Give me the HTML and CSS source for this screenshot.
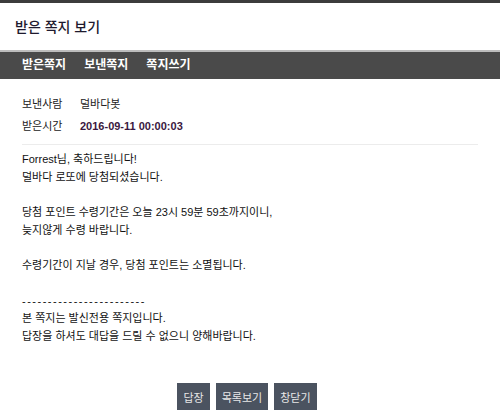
FILE: index.html
```html
<!DOCTYPE html>
<html lang="ko">
<head>
    <meta charset="UTF-8">
    <title>받은 쪽지 보기</title>
    <link rel="stylesheet" href="styles.css">
</head>
<body>
    <div class="popup">
        <h1 class="title">받은 쪽지 보기</h1>
        <ul class="tabs">
            <li><a href="#">받은쪽지</a></li>
            <li><a href="#">보낸쪽지</a></li>
            <li><a href="#">쪽지쓰기</a></li>
        </ul>

        <div class="content">
            <dl class="info">
                <dt>보낸사람</dt>
                <dd>덜바다봇</dd>
                <dt>받은시간</dt>
                <dd class="date">2016-09-11 00:00:03</dd>
            </dl>

            <div class="memo">
                <p>Forrest님, 축하드립니다!<br>덜바다 로또에 당첨되셨습니다.</p>
                <p>당첨 포인트 수령기간은 오늘 23시 59분 59초까지이니,<br>늦지않게 수령 바랍니다.</p>
                <p>수령기간이 지날 경우, 당첨 포인트는 소멸됩니다.</p>
                <p><span class="dash">------------------------</span><br>본 쪽지는 발신전용 쪽지입니다.<br>답장을 하셔도 대답을 드릴 수 없으니 양해바랍니다.</p>
            </div>
        </div>

        <div class="btns">
            <button>답장</button>
            <button>목록보기</button>
            <button>창닫기</button>
        </div>
    </div>
</body>
</html>
```

FILE: styles.css
```css
body {
    margin: 0;
    font-family: "Liberation Sans", "Noto Sans CJK KR", sans-serif;
    font-size: 11px;
    color: #222;
    background: #fff;
}

.popup {
    border-top: 3px solid #3c3c3c;
}

.title {
    margin: 0;
    padding: 13px 15px 12px;
    font-size: 14px;
    font-weight: 500;
    line-height: 22px;
    color: #1e1a2e;
}

.tabs {
    list-style: none;
    margin: 0;
    padding: 0 13px;
    height: 27px;
    display: flex;
    align-items: center;
    background: #4a4a4a;
    border-top: 2px solid #bdbdbd;
}

.tabs a {
    display: block;
    padding: 0 9px;
    color: #fff;
    font-weight: bold;
    font-size: 12px;
    text-decoration: none;
    line-height: 27px;
}

.content {
    padding: 16px 22px 0;
}

.info {
    margin: 0;
    display: grid;
    grid-template-columns: 58px 1fr;
    row-gap: 4px;
    line-height: 18px;
    padding-bottom: 9px;
    border-bottom: 1px solid #ececec;
}

.info dt,
.info dd {
    margin: 0;
}

.info .date {
    font-weight: bold;
    color: #3a1840;
}

.memo {
    padding-top: 6px;
    line-height: 17.7px;
    color: #111;
}

.memo p {
    margin: 0 0 17.7px;
}

.dash {
    letter-spacing: 1.5px;
}

.btns {
    display: flex;
    justify-content: center;
    gap: 6px;
    padding-top: 20px;
    margin-right: 6px;
}

.btns button {
    height: 28px;
    padding: 0 6px;
    border: 0;
    background: #4b5360;
    color: #e8e8e8;
    font-family: inherit;
    font-size: 11px;
    cursor: pointer;
}
```
